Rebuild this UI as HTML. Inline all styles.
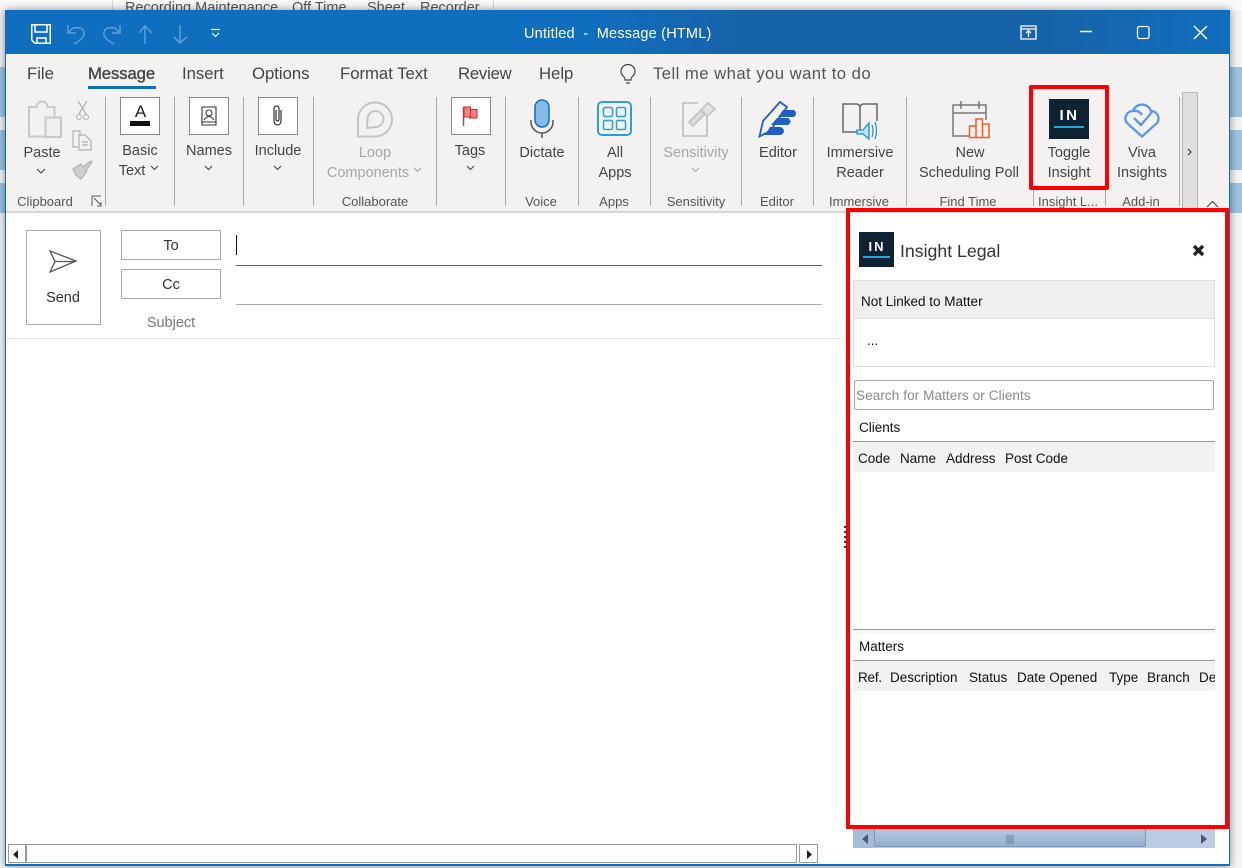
<!DOCTYPE html>
<html><head><meta charset="utf-8">
<style>
html,body{margin:0;padding:0;width:1242px;height:868px;overflow:hidden;background:#f4f4f4}
body{position:relative;font-family:"Liberation Sans",sans-serif;color:#444}
.a{position:absolute}
.t{position:absolute;white-space:nowrap;line-height:20px;font-size:14.5px;color:#444;margin-top:1px}
.c{transform:translateX(-50%)}
.g{font-size:13px;color:#555;line-height:16px}
.d{color:#a6a6a6}
.tab{font-size:16.7px;color:#444;line-height:22px}
.p{color:#111;font-size:13.5px;line-height:18px}
.sep{position:absolute;top:97px;width:1px;height:109px;background:#aaa}
.box{position:absolute;top:97px;width:38px;height:36px;background:#fff;border:1px solid #8a8a8a}
.ln{position:absolute;background:#999}
svg{position:absolute;overflow:visible}
</style></head><body>

<!-- background behind window -->
<div class="a" style="left:0;top:0;width:1242px;height:10px;background:#fafafa"></div>
<div class="a" style="left:112px;top:0;width:1px;height:10px;background:#d8d8d8"></div>
<div class="a" style="left:493px;top:0;width:1px;height:10px;background:#d8d8d8"></div>
<div class="t" style="left:125px;top:-3px;color:#555">Recording Maintenance</div>
<div class="t" style="left:292px;top:-3px;color:#555">Off Time</div>
<div class="t" style="left:367px;top:-3px;color:#555">Sheet</div>
<div class="t" style="left:420px;top:-3px;color:#555">Recorder</div>
<div class="a" style="left:0;top:67px;width:5px;height:50px;background:#9cc3e0"></div>
<div class="a" style="left:0;top:130px;width:5px;height:40px;background:#9cc3e0"></div>
<div class="a" style="left:0;top:183px;width:5px;height:30px;background:#9cc3e0"></div>
<div class="a" style="left:1230px;top:67px;width:12px;height:50px;background:#9cc3e0"></div>
<div class="a" style="left:1230px;top:130px;width:12px;height:40px;background:#9cc3e0"></div>
<div class="a" style="left:1230px;top:183px;width:12px;height:30px;background:#9cc3e0"></div>

<!-- window -->
<div class="a" style="left:5px;top:10px;width:1225px;height:856px;background:#fff;box-shadow:0 0 8px rgba(0,0,0,.45)"></div>
<div class="a" style="left:5px;top:10px;width:1225px;height:44px;background:linear-gradient(90deg,#106ebe 0,#106ebe 48%,#1763a8 60%,#1763a8 85%,#106ebe 100%)"></div>
<div class="a" style="left:5px;top:54px;width:1225px;height:157px;background:#f3f2f1"></div>
<div class="a" style="left:5px;top:211px;width:1225px;height:2px;background:#d8d6d4"></div>
<div class="a" style="left:5px;top:10px;width:1px;height:856px;background:#106ebe"></div>
<div class="a" style="left:1229px;top:10px;width:1px;height:856px;background:#106ebe"></div>
<div class="a" style="left:5px;top:864px;width:1225px;height:2px;background:#106ebe"></div>

<!-- title bar icons -->
<svg style="left:0;top:0" width="240" height="54" fill="none" stroke-width="1.5">
<path d="M31.750 24.750H50.250V43.250H35L31.750 40Z M35 25V32H47V25 M37 43V38H46V43" stroke="#fff"/>
<path d="M68 25V33H76M68 33L73 28Q85 26 84 35Q83 39 74 44" stroke="#5ea0d8"/>
<path d="M120 25V33H112M120 33L115 28Q103 26 104 35Q105 39 114 44" stroke="#5ea0d8"/>
<path d="M145 44V27M139 33L145 26L152 33" stroke="#5ea0d8"/>
<path d="M180 25V43M174 37L180 43L187 37" stroke="#5ea0d8"/>
<path d="M211 29.500H220M212 33L215.500 36.500L219 33" stroke="#fff" stroke-width="1.200"/>
</svg>
<div class="t" style="left:524px;top:23px;color:#fff;font-size:14.5px;letter-spacing:.2px">Untitled&nbsp; -&nbsp; Message (HTML)</div>
<svg style="left:1015px;top:20px" width="200" height="26" fill="none" stroke="#fff" stroke-width="1.300">
<path d="M6 6H21V19H6ZM6 9H21M13.500 17V11M11 13L13.500 10.500L16 13"/>
<path d="M65 11.500H77" stroke-width="1.500"/>
<rect x="122.500" y="6.500" width="11.500" height="12" rx="2"/>
<path d="M179 6L192 19M192 6L179 19" stroke-width="1.500"/>
</svg>

<!-- tabs -->
<div class="t tab" style="left:27px;top:62px">File</div>
<div class="t tab" style="left:88px;top:62px;-webkit-text-stroke:.35px #444;letter-spacing:-.1px">Message</div>
<div class="a" style="left:88px;top:86px;width:68px;height:3px;background:#106ebe"></div>
<div class="t tab" style="left:182px;top:62px">Insert</div>
<div class="t tab" style="left:252px;top:62px">Options</div>
<div class="t tab" style="left:340px;top:62px">Format Text</div>
<div class="t tab" style="left:458px;top:62px;letter-spacing:-.2px">Review</div>
<div class="t tab" style="left:539px;top:62px">Help</div>
<svg style="left:618px;top:63px" width="20" height="22" fill="none" stroke="#444" stroke-width="1.200"><path d="M6 14C4 12 3 10.500 3 8.500A7 7 0 0 1 17 8.500C17 10.500 16 12 14 14Q13 15 13 17H7Q7 15 6 14ZM8 20H12"/></svg>
<div class="t tab" style="left:653px;top:62px;color:#555;letter-spacing:.45px">Tell me what you want to do</div>

<!-- separators -->
<div class="sep" style="left:105px"></div><div class="sep" style="left:174px"></div><div class="sep" style="left:243px"></div><div class="sep" style="left:313px"></div><div class="sep" style="left:436px"></div><div class="sep" style="left:505px"></div><div class="sep" style="left:578px"></div><div class="sep" style="left:650px"></div><div class="sep" style="left:741px"></div><div class="sep" style="left:813px"></div><div class="sep" style="left:906px"></div><div class="sep" style="left:1033px;top:190px;height:16px"></div><div class="sep" style="left:1105px;top:190px;height:16px"></div><div class="sep" style="left:1179px"></div>

<!-- clipboard -->
<svg style="left:0;top:90px" width="110" height="120" fill="none">
<path d="M46 46.500H29V17H36.500Q37 11.500 42 11.500Q47 11.500 47.500 17H54.500V27" stroke="#c8c8c8" stroke-width="2"/>
<rect x="45.500" y="27.500" width="15.500" height="19.500" fill="#f0f0f0" stroke="#c8c8c8" stroke-width="2"/>
<path d="M78 11L86 24M87 11L79 24" stroke="#b0b0b0" stroke-width="1.200"/><circle cx="79" cy="27" r="2.500" stroke="#b0b0b0"/><circle cx="86" cy="27" r="2.500" stroke="#b0b0b0"/>
<path d="M78 57H73V41H80V45M80 45H85L91 51V60H79V45ZM82 52H88M82 55H88" stroke="#b0b0b0" stroke-width="1.200"/>
<path d="M73 79L81 74L87 81L81 89Q76 87 73 79ZM84 76L91 71L92 72L87 79" stroke="#b0b0b0" fill="#cfcfcf" stroke-width="1.200"/>
<path d="M37 79L41 83L45 79" stroke="#444" stroke-width="1.100"/>
<path d="M92 116V106H101M94 108L101 115M97 116H101V112" stroke="#555" stroke-width="1"/>
</svg>
<div class="t c" style="left:42px;top:142px">Paste</div>
<div class="t g c" style="left:45px;top:193px">Clipboard</div>

<!-- Basic text -->
<div class="box" style="left:120px"></div>
<div class="t c" style="left:140.500px;top:101px;font-size:17px;color:#222">A</div>
<div class="a" style="left:130px;top:121px;width:20px;height:5px;background:#111"></div>
<div class="t c" style="left:140px;top:140px">Basic</div>
<div class="t c" style="left:132px;top:160px">Text</div>
<svg style="left:150px;top:164px" width="10" height="8" fill="none" stroke="#444" stroke-width="1.100"><path d="M1 2L4.500 5.500L8 2"/></svg>

<!-- Names -->
<div class="box" style="left:189px"></div>
<svg style="left:200px;top:106px" width="18" height="20" fill="none" stroke="#333" stroke-width="1.100"><path d="M2 1H16V16H2ZM2 16V19H16V16"/><circle cx="9" cy="7" r="3"/><path d="M4 14Q9 7 14 14"/></svg>
<div class="t c" style="left:209px;top:140px">Names</div>
<svg style="left:204px;top:164px" width="10" height="8" fill="none" stroke="#444" stroke-width="1.100"><path d="M1 2L4.500 5.500L8 2"/></svg>

<!-- Include -->
<div class="box" style="left:258px"></div>
<svg style="left:271px;top:104px" width="14" height="24" fill="none" stroke="#333" stroke-width="1.200"><path d="M10 6V16Q10 21 6.500 21Q3 21 3 16V5Q3 2 5.500 2Q8 2 8 5V15Q8 17 6.500 17Q5 17 5 15V6"/></svg>
<div class="t c" style="left:278px;top:140px">Include</div>
<svg style="left:273px;top:164px" width="10" height="8" fill="none" stroke="#444" stroke-width="1.100"><path d="M1 2L4.500 5.500L8 2"/></svg>

<!-- Loop -->
<svg style="left:355px;top:100px" width="40" height="40" fill="none" stroke="#c4c4c4" stroke-width="2"><path d="M3 36.500V19A17 17 0 1 1 20 36.500Z"/><path d="M12 28L12.500 19A8 8 0 1 1 20 27Z"/></svg>
<div class="t c d" style="left:375px;top:142px">Loop</div>
<div class="t c d" style="left:368px;top:162px">Components</div>
<svg style="left:413px;top:166px" width="10" height="8" fill="none" stroke="#a6a6a6" stroke-width="1.100"><path d="M1 2L4.500 5.500L8 2"/></svg>
<div class="t g c" style="left:375px;top:193px">Collaborate</div>

<!-- Tags -->
<div class="box" style="left:451px"></div>
<svg style="left:460px;top:104px" width="20" height="24" fill="none"><path d="M3.500 3V22" stroke="#666" stroke-width="1.500"/><path d="M10.500 5.500H17V14H9.500V11.500" fill="#f67f84" stroke="#d8262c"/><path d="M4 3H10.500V13H4Z" fill="#f67f84" stroke="#d8262c"/></svg>
<div class="t c" style="left:470px;top:140px">Tags</div>
<svg style="left:466px;top:164px" width="10" height="8" fill="none" stroke="#444" stroke-width="1.100"><path d="M1 2L4.500 5.500L8 2"/></svg>

<!-- Dictate -->
<svg style="left:528px;top:98px" width="28" height="40" fill="none"><rect x="7" y="2" width="14" height="27" rx="7" fill="#83bceb" stroke="#106ebe" stroke-width="1.500"/><path d="M3 22V24A11 11 0 0 0 25 24V22M14 35V40" stroke="#555" stroke-width="1.500"/></svg>
<div class="t c" style="left:542px;top:142px">Dictate</div>
<div class="t g c" style="left:541px;top:193px">Voice</div>

<!-- All apps -->
<svg style="left:597px;top:101px" width="36" height="36" fill="none" stroke="#2a9fd8" stroke-width="1.500"><rect x="1" y="1" width="33" height="33" rx="4" stroke-width="2"/><rect x="6.500" y="6.500" width="9" height="9" rx="1.500"/><rect x="19.500" y="6.500" width="9" height="9" rx="1.500"/><rect x="6.500" y="19.500" width="9" height="9" rx="1.500"/><rect x="19.500" y="19.500" width="9" height="9" rx="1.500"/></svg>
<div class="t c" style="left:615px;top:142px">All</div>
<div class="t c" style="left:615px;top:162px">Apps</div>
<div class="t g c" style="left:614px;top:193px">Apps</div>

<!-- Sensitivity -->
<svg style="left:681px;top:98px" width="36" height="40" fill="none" stroke="#c4c4c4" stroke-width="1.800"><path d="M26 17V38H2V5H17"/><path d="M8 24L20 12L24 16L12 28Z" fill="#dcdcdc"/><path d="M20 12L27 5L34 11L26 18Z" fill="#e4e4e4"/></svg>
<div class="t c d" style="left:696px;top:142px">Sensitivity</div>
<svg style="left:691px;top:166px" width="10" height="8" fill="none" stroke="#a6a6a6" stroke-width="1.100"><path d="M1 2L4.500 5.500L8 2"/></svg>
<div class="t g c" style="left:696px;top:193px">Sensitivity</div>

<!-- Editor -->
<svg style="left:758px;top:99px" width="40" height="40"><path d="M1.500 37.500L5 22L22 3L29 8L12 32Z" fill="none" stroke="#1f5fc4" stroke-width="1.800"/><path d="M25 11H36Q40 14.500 36 18H20ZM19 19H30Q35 22.500 30 26H13ZM12 28H23Q29 32 23 36H7Z" fill="#1f5fc4"/></svg>
<div class="t c" style="left:778px;top:142px">Editor</div>
<div class="t g c" style="left:777px;top:193px">Editor</div>

<!-- Immersive -->
<svg style="left:840px;top:101px" width="42" height="40" fill="none"><path d="M20 31L3 31V3H16Q20 3 20 7V31M20 7Q20 3 24 3H37V20" stroke="#666" stroke-width="1.500"/><path d="M17 29H23L29 22V38L23 33H17Z" fill="#bfe0f7" stroke="#1e90d8" stroke-width="1.300"/><path d="M32 24Q34 30 32 36M35 21Q38 30 35 38" stroke="#1e90d8" stroke-width="1.200"/></svg>
<div class="t c" style="left:860px;top:142px">Immersive</div>
<div class="t c" style="left:860px;top:162px">Reader</div>
<div class="t g c" style="left:859px;top:193px">Immersive</div>

<!-- Scheduling -->
<svg style="left:951px;top:100px" width="40" height="40" fill="none"><path d="M24 36H2V5H35V20M2 13H35M10 1V9M28 1V9" stroke="#777" stroke-width="1.500"/><path d="M18.500 26H25V37.500H18.500ZM25 19H31.500V37.500H25ZM31.500 24H38V37.500H31.500Z" stroke="#e8602c" stroke-width="1.500" fill="#fbeee8"/></svg>
<div class="t c" style="left:970px;top:142px">New</div>
<div class="t c" style="left:969px;top:162px">Scheduling Poll</div>
<div class="t g c" style="left:968px;top:193px">Find Time</div>

<!-- Toggle -->
<div class="a" style="left:1049px;top:99px;width:40px;height:40px;background:#0e2231"></div>
<div class="t c" style="left:1069.500px;top:105px;color:#fff;font-weight:bold;font-size:15px;letter-spacing:2.500px">IN</div>
<div class="a" style="left:1054px;top:126px;width:30px;height:1.500px;background:#1fa8d8"></div>
<div class="t c" style="left:1069px;top:142px">Toggle</div>
<div class="t c" style="left:1069px;top:162px">Insight</div>
<div class="t g c" style="left:1068px;top:193px">Insight L...</div>

<!-- Viva -->
<svg style="left:1123px;top:100px" width="38" height="38" fill="none" stroke="#5b96f0" stroke-width="2.300"><path d="M19 36.500L4 23A7.500 7.500 0 0 1 10 11A9.500 9.500 0 0 1 28 11A7.500 7.500 0 0 1 34 23Z"/><path d="M10 11Q16 10 19 15M11 18L18 25L29 12"/></svg>
<div class="t c" style="left:1142px;top:142px">Viva</div>
<div class="t c" style="left:1142px;top:162px">Insights</div>
<div class="t g c" style="left:1141px;top:193px">Add-in</div>

<!-- ribbon scroll -->
<div class="a" style="left:1182px;top:92px;width:14px;height:118px;background:#e1dfdd;border:1px solid #b5b5b5"></div>
<svg style="left:1186px;top:146px" width="10" height="12" fill="none" stroke="#333" stroke-width="1.100"><path d="M2 3L5 6L2 9"/></svg>
<svg style="left:1205px;top:199px" width="16" height="10" fill="none" stroke="#444" stroke-width="1.100"><path d="M2 8L7.500 2.500L13 8"/></svg>

<!-- compose -->
<div class="a" style="left:26px;top:230px;width:73px;height:93px;border:1px solid #aaa;background:#fff"></div>
<svg style="left:48px;top:249px" width="30" height="26" fill="none" stroke="#555" stroke-width="1.300"><path d="M2 2L28 12L2 23L7 12.500ZM7 12.500H28"/></svg>
<div class="t c" style="left:63px;top:287px;color:#333">Send</div>
<div class="a" style="left:121px;top:230px;width:98px;height:28px;border:1px solid #aaa"></div>
<div class="a" style="left:121px;top:269px;width:98px;height:28px;border:1px solid #aaa"></div>
<div class="t c" style="left:171px;top:235px;color:#333">To</div>
<div class="t c" style="left:171px;top:274px;color:#333">Cc</div>
<div class="t c" style="left:171px;top:312px;color:#777">Subject</div>
<div class="a" style="left:236px;top:235px;width:1px;height:20px;background:#111"></div>
<div class="a" style="left:236px;top:265px;width:586px;height:1px;background:#0a78d4"></div>
<div class="a" style="left:236px;top:304px;width:586px;height:1px;background:#aaa"></div>
<div class="a" style="left:6px;top:338px;width:835px;height:1px;background:#e1e1e1"></div>

<!-- splitter dots -->
<div class="a" style="left:844px;top:526px;width:3px;height:2px;background:#333;box-shadow:0 5px #333,0 10px #333,0 15px #333,0 20px #333"></div>

<!-- pane -->
<div class="a" style="left:859px;top:232px;width:35px;height:35px;background:#0e2231"></div>
<div class="t c" style="left:877px;top:236px;color:#fff;font-weight:bold;font-size:13px;letter-spacing:2px">IN</div>
<div class="a" style="left:863px;top:256px;width:27px;height:1.500px;background:#1fa8d8"></div>
<div class="t" style="left:900px;top:240px;font-size:17.7px;color:#333">Insight Legal</div>
<svg style="left:1192px;top:244px" width="13" height="13" fill="none" stroke="#222" stroke-width="3.400"><path d="M2 2L11 11M11 2L2 11"/></svg>

<div class="a" style="left:853px;top:280px;width:360px;height:85px;border:1px solid #ddd"></div>
<div class="a" style="left:854px;top:281px;width:360px;height:37px;background:#efefef;border-bottom:1px solid #ddd"></div>
<div class="t p" style="left:861px;top:292px">Not Linked to Matter</div>
<div class="t p" style="left:867px;top:331px">...</div>

<div class="a" style="left:854px;top:380px;width:358px;height:28px;border:1px solid #a3a7b3;border-radius:2px;background:#fff"></div>
<div class="t p" style="left:856px;top:386px;color:#8a8a8a;letter-spacing:.1px">Search for Matters or Clients</div>

<div class="t p" style="left:859px;top:418px">Clients</div>
<div class="a" style="left:853px;top:441px;width:362px;height:31px;background:#f2f2f2"></div>
<div class="ln" style="left:853px;top:441px;width:362px;height:1px"></div>
<div class="t p" style="left:858px;top:449px">Code</div>
<div class="t p" style="left:900px;top:449px">Name</div>
<div class="t p" style="left:946px;top:449px">Address</div>
<div class="t p" style="left:1005px;top:449px">Post Code</div>

<div class="a" style="left:853px;top:629px;width:362px;height:5px;background:#f6f6f6"></div>
<div class="ln" style="left:853px;top:629px;width:362px;height:1px"></div>
<div class="t p" style="left:859px;top:637px">Matters</div>
<div class="a" style="left:853px;top:660px;width:362px;height:31px;background:#f2f2f2;overflow:hidden">
  <div class="t p" style="left:5px;top:8px;letter-spacing:-.2px">Ref.</div>
  <div class="t p" style="left:37px;top:8px">Description</div>
  <div class="t p" style="left:116px;top:8px">Status</div>
  <div class="t p" style="left:164px;top:8px">Date Opened</div>
  <div class="t p" style="left:256px;top:8px">Type</div>
  <div class="t p" style="left:294px;top:8px">Branch</div>
  <div class="t p" style="left:346px;top:8px">Dept</div>
</div>
<div class="ln" style="left:853px;top:660px;width:362px;height:1px"></div>

<!-- pane scrollbar -->
<div class="a" style="left:853px;top:826px;width:362px;height:22px;background:#b9cde5"></div>
<div class="a" style="left:853px;top:826px;width:21px;height:22px;background:#a3bcd9"></div>
<div class="a" style="left:874px;top:826px;width:272px;height:21px;background:linear-gradient(#bccfe4,#94afd0);border:1px solid #7d97b8;border-top:0;border-radius:0 0 2px 2px;box-sizing:border-box"></div>
<svg style="left:853px;top:826px" width="362" height="22"><path d="M15 8L9 13L15 18Z" fill="#556"/><path d="M154 9V18M156 9V18M158 9V18M160 9V18" stroke="#6d7f96" stroke-width="1"/><path d="M348 8L354 13L348 18Z" fill="#556"/></svg>

<!-- red highlights -->
<div class="a" style="left:1029px;top:85px;width:80px;height:105px;box-sizing:border-box;border:4px solid #f00;border-radius:2px"></div>
<div class="a" style="left:846px;top:208px;width:383px;height:621px;box-sizing:border-box;border:4px solid #f00"></div>

<!-- bottom scrollbar -->
<div class="a" style="left:8px;top:844px;width:789px;height:19px;box-sizing:border-box;border:1px solid #999;background:#fff"></div>
<div class="a" style="left:8px;top:844px;width:19px;height:19px;box-sizing:border-box;border:1px solid #999;border-right-width:2px;background:#fff"></div>
<div class="a" style="left:799px;top:844px;width:19px;height:19px;box-sizing:border-box;border:1px solid #999;background:#fff"></div>
<svg style="left:0;top:840px" width="830" height="26"><path d="M18 10V19L13 14.500Z M807 10V19L812 14.500Z" fill="#222"/></svg>

</body></html>
